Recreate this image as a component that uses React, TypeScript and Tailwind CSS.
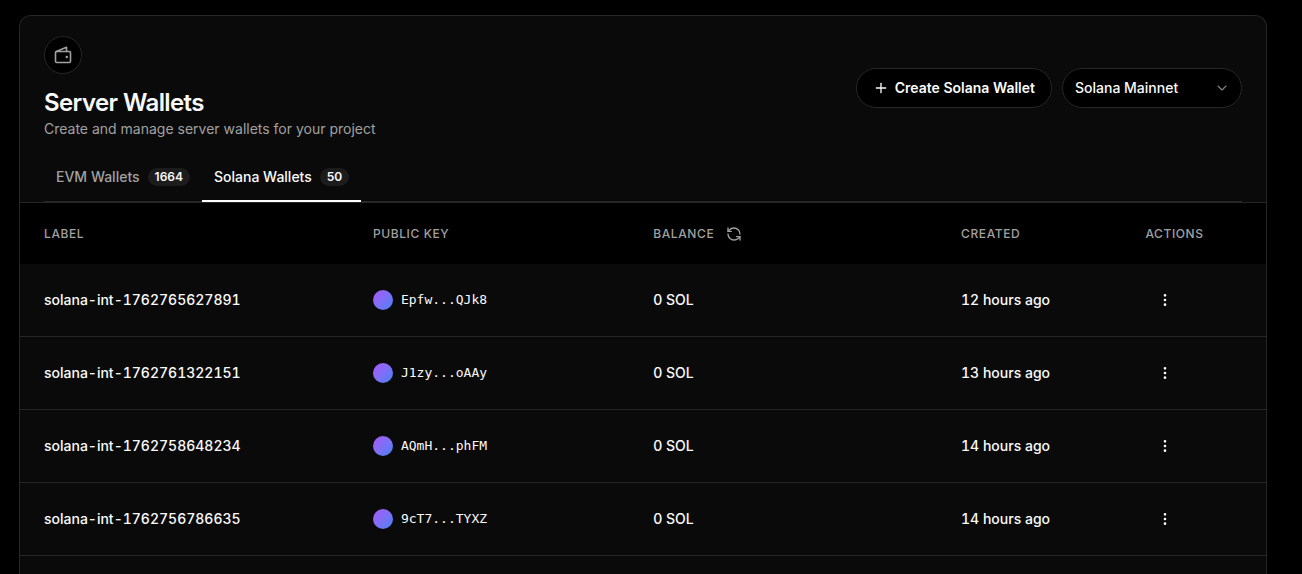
import { ChevronDown, EllipsisVertical, Plus, RefreshCcw } from "lucide-react";

type Wallet = { label: string; publicKey: string; balance: string; created: string };

const wallets: Wallet[] = [
  { label: "solana-int-1762765627891", publicKey: "Epfw...QJk8", balance: "0 SOL", created: "12 hours ago" },
  { label: "solana-int-1762761322151", publicKey: "J1zy...oAAy", balance: "0 SOL", created: "13 hours ago" },
  { label: "solana-int-1762758648234", publicKey: "AQmH...phFM", balance: "0 SOL", created: "14 hours ago" },
  { label: "solana-int-1762756786635", publicKey: "9cT7...TYXZ", balance: "0 SOL", created: "14 hours ago" },
];

function WalletIcon() {
  return (
    <svg viewBox="0 0 18 18" className="size-[18px]" fill="none" stroke="currentColor" strokeWidth="1.6" strokeLinecap="round" strokeLinejoin="round" aria-hidden="true">
      <rect x="1.5" y="5.5" width="15" height="11" rx="1.25" />
      <path d="M2.25 5.5 12.5 1.25V5.5" />
      <circle cx="12.75" cy="11" r="1.25" fill="currentColor" stroke="none" />
    </svg>
  );
}

function Tab({ label, count, active = false }: { label: string; count: number; active?: boolean }) {
  return (
    <button
      type="button"
      role="tab"
      aria-selected={active}
      className={`flex h-12 items-center gap-2 border-b-2 px-3 text-sm font-medium ${active ? "border-white text-neutral-50" : "border-transparent text-[#a1a1a1]"}`}
    >
      {label}
      <span className="rounded-full bg-[#1c1c1c] px-[7px] text-xs/[18px] font-semibold text-neutral-50">{count}</span>
    </button>
  );
}

function HeaderCell({ children }: { children: React.ReactNode }) {
  return <th scope="col" className="px-6 text-left font-medium">{children}</th>;
}

export default function App() {
  return (
    <main className="flex h-screen flex-col overflow-hidden bg-black pr-[35px] pl-[19px] pt-[15px] font-['Inter',sans-serif] text-neutral-50">
      <section className="grow rounded-t-xl border border-b-0 border-[#262626] bg-[#0a0a0a]">
        <header className="border-b border-[#262626] px-6 pt-5">
          <div className="flex items-center justify-between gap-4">
            <div>
              <div className="flex size-[38px] items-center justify-center rounded-full border border-[#262626] bg-black text-[#a1a1a1]">
                <WalletIcon />
              </div>
              <h1 className="mt-[13px] text-2xl font-semibold tracking-tight">Server Wallets</h1>
              <p className="text-sm text-[#a1a1a1]">Create and manage server wallets for your project</p>
            </div>
            <div className="flex items-center gap-2.5">
              <button type="button" className="flex h-10 items-center gap-1.5 rounded-full border border-[#262626] bg-black px-4 text-sm font-semibold">
                <Plus className="size-4" strokeWidth={2} />
                Create Solana Wallet
              </button>
              <div className="relative">
                <select aria-label="Network" className="h-10 w-[180px] appearance-none rounded-full border border-[#262626] bg-black px-3 text-sm font-medium">
                  <option>Solana Mainnet</option>
                </select>
                <ChevronDown className="pointer-events-none absolute top-3 right-3 size-4 text-[#808080]" strokeWidth={1.75} />
              </div>
            </div>
          </div>
          <div role="tablist" className="mt-[15px] flex shadow-[inset_0_-1px_0_#262626]">
            <Tab label="EVM Wallets" count={1664} />
            <Tab label="Solana Wallets" count={50} active />
          </div>
        </header>
        <table className="w-full table-fixed border-separate border-spacing-0 text-sm">
          <colgroup>
            <col className="w-[26.4%]" />
            <col className="w-[22.5%]" />
            <col className="w-[24.7%]" />
            <col className="w-[14.8%]" />
            <col />
          </colgroup>
          <thead className="bg-black">
            <tr className="h-[61px] text-xs tracking-wider text-[#a1a1a1] uppercase">
              <HeaderCell>Label</HeaderCell>
              <HeaderCell>Public Key</HeaderCell>
              <HeaderCell>
                <span className="flex items-center gap-3">
                  Balance
                  <button type="button" aria-label="Refresh balances">
                    <RefreshCcw className="size-4" strokeWidth={2} />
                  </button>
                </span>
              </HeaderCell>
              <HeaderCell>Created</HeaderCell>
              <HeaderCell>Actions</HeaderCell>
            </tr>
          </thead>
          <tbody>
            {wallets.map((wallet) => (
              <tr key={wallet.label} className="h-[73px] [&>td]:border-b [&>td]:border-[#262626]">
                <td className="px-6 font-medium tabular-nums">{wallet.label}</td>
                <td className="px-6">
                  <span className="flex items-center gap-2">
                    <span className="size-5 rounded-full bg-linear-to-br from-[#a855f7] to-[#3b82f6]" />
                    <span className="font-['DejaVu_Sans_Mono',monospace] text-[13px]">{wallet.publicKey}</span>
                  </span>
                </td>
                <td className="px-6 font-medium">{wallet.balance}</td>
                <td className="px-6 font-medium tabular-nums">{wallet.created}</td>
                <td className="px-6">
                  <button type="button" aria-label={`Actions for ${wallet.label}`} className="flex size-10 items-center justify-center">
                    <EllipsisVertical className="size-4" />
                  </button>
                </td>
              </tr>
            ))}
          </tbody>
        </table>
      </section>
    </main>
  );
}
